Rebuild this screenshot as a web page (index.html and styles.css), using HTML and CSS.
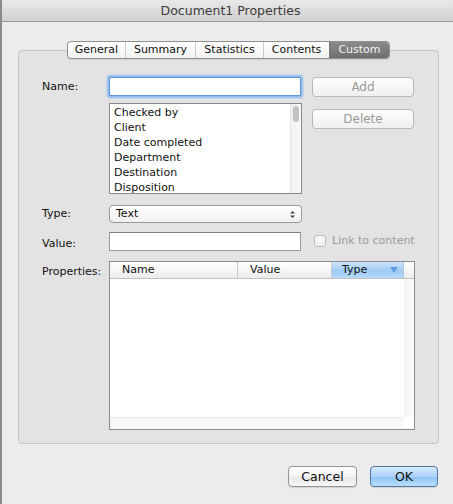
FILE: index.html
```html
<!DOCTYPE html>
<html>
<head>
<meta charset="utf-8">
<link rel="stylesheet" href="styles.css">
</head>
<body>
<div class="window">
  <div class="titlebar">Document1 Properties</div>
  <div class="content">
    <div class="tabs">
      <span class="tab">General</span>
      <span class="tab">Summary</span>
      <span class="tab">Statistics</span>
      <span class="tab">Contents</span>
      <span class="tab selected">Custom</span>
    </div>
    <div class="group">
      <div class="form">
        <label class="lbl lbl-name">Name:</label>
        <div class="input focus"></div>
        <div class="btn disabled">Add</div>

        <div></div>
        <div class="listbox">
          <div class="items">
            <div>Checked by</div>
            <div>Client</div>
            <div>Date completed</div>
            <div>Department</div>
            <div>Destination</div>
            <div>Disposition</div>
          </div>
          <div class="vscroll"><div class="thumb"></div></div>
        </div>
        <div class="btn disabled btn-delete">Delete</div>

        <label class="lbl lbl-type">Type:</label>
        <div class="popup row-type"><span>Text</span>
          <svg width="7" height="9" viewBox="0 0 7 9"><path d="M1 3.5 L3.5 1 L6 3.5 Z M1 5.5 L3.5 8 L6 5.5 Z" fill="#444"/></svg>
        </div>
        <div class="row-type"></div>

        <label class="lbl lbl-value">Value:</label>
        <div class="input plain row-value"></div>
        <div class="check row-value"><span class="box"></span><span>Link to content</span></div>

        <label class="lbl lbl-props">Properties:</label>
        <div class="table row-props">
          <div class="thead">
            <div class="th c-name">Name</div>
            <div class="th c-value">Value</div>
            <div class="th c-type">Type <svg width="8" height="6" viewBox="0 0 8 6"><path d="M0 0 H8 L4 6 Z" fill="#5e9ee6"/></svg></div>
            <div class="th c-rest"></div>
          </div>
          <div class="tbody">
            <div class="tmain">
              <div class="tarea"></div>
              <div class="vtrack"></div>
            </div>
            <div class="tfoot">
              <div class="htrack"></div>
              <div class="corner"></div>
            </div>
          </div>
        </div>
      </div>
    </div>
    <div class="actions">
      <div class="btn2">Cancel</div>
      <div class="btn2 ok">OK</div>
    </div>
  </div>
</div>
</body>
</html>
```
FILE: styles.css
```css
* { box-sizing: border-box; }
html, body { margin: 0; padding: 0; }
body {
  width: 453px;
  height: 504px;
  overflow: hidden;
  font-family: "DejaVu Sans", "Liberation Sans", sans-serif;
  font-size: 11px;
  color: #111;
}
.window {
  width: 453px;
  height: 504px;
  background: #ececec;
  border-left: 2px solid #8a8a8a;
  display: flex;
  flex-direction: column;
}
.titlebar {
  height: 22px;
  flex: none;
  background: linear-gradient(#e9e9e9, #d0d0d0);
  border-bottom: 1px solid #9b9b9b;
  text-align: center;
  font-size: 12.5px;
  line-height: 21px;
  color: #3c3c3c;
  padding-left: 6px;
}
.content {
  padding: 19px 0 0 16px;
}
.tabs {
  display: flex;
  width: 323px;
  height: 18px;
  margin: 0 0 -9px 49px;
  position: relative;
  z-index: 1;
  border: 1px solid #8f8f8f;
  border-radius: 4px;
  background: linear-gradient(#ffffff, #f1f1f1);
  overflow: hidden;
  box-shadow: 0 1px 1px rgba(0,0,0,0.08);
}
.tab {
  flex: none;
  text-align: center;
  line-height: 16px;
  font-size: 11px;
  color: #111;
  border-right: 1px solid #c9c9c9;
}
.tab:nth-child(1) { width: 58px; }
.tab:nth-child(2) { width: 70px; }
.tab:nth-child(3) { width: 68px; }
.tab:nth-child(4) { width: 66px; border-right: 1px solid #777; }
.tab.selected {
  flex: 1;
  border-right: none;
  background: linear-gradient(#8a8a8a, #6f6f6f);
  color: #f4f4f4;
}
.group {
  width: 421px;
  height: 394px;
  background: #e3e3e3;
  border: 1px solid #c6c6c6;
  border-radius: 4px;
  padding: 26px 0 0 23px;
}
.form {
  display: grid;
  grid-template-columns: 57px 193px 102px;
  column-gap: 10px;
  align-items: start;
}
.lbl {
  font-size: 11px;
  color: #111;
}
.lbl-name { padding-top: 3px; }
.input {
  height: 19px;
  width: 192px;
  background: #fff;
  border: 1px solid #9c9c9c;
  border-top-color: #7d7d7d;
}
.input.focus {
  border: 1px solid #5e92d3;
  box-shadow: 0 0 2px 2px #8ebbef;
  border-radius: 1px;
}
.btn {
  height: 20px;
  border: 1px solid #b9b9b9;
  border-radius: 4px;
  background: linear-gradient(#fdfdfd, #f0f0f0);
  text-align: center;
  line-height: 18px;
  font-size: 12px;
}
.btn.disabled { color: #9a9a9a; }
.btn-delete { margin-top: 12px; }
.listbox {
  margin-top: 6px;
  height: 91px;
  width: 193px;
  background: #fff;
  border: 1px solid #888;
  display: flex;
}
.items {
  flex: 1;
  padding: 1px 0 0 4px;
  line-height: 15px;
  font-size: 11px;
}
.vscroll {
  width: 11px;
  flex: none;
  background: linear-gradient(90deg, #f0f0f0, #fafafa);
  border-left: 1px solid #e4e4e4;
  padding: 2px 2px 0 2px;
}
.thumb {
  height: 16px;
  width: 6px;
  border-radius: 3px;
  background: #c2c2c2;
}
.lbl-type { margin-top: 11px; padding-top: 2px; }
.popup.row-type {
  margin-top: 11px;
  height: 18px;
  width: 193px;
  border: 1px solid #9a9a9a;
  border-radius: 4px;
  background: linear-gradient(#ffffff, #f0f0f0);
  display: flex;
  align-items: center;
  justify-content: space-between;
  padding: 0 5px 0 6px;
}
.popup span { line-height: 16px; }
.lbl-value { margin-top: 11px; padding-top: 3px; }
.input.row-value { margin-top: 9px; height: 19px; }
.check.row-value {
  margin-top: 11px;
  display: flex;
  align-items: center;
  gap: 6px;
  color: #9a9a9a;
  font-size: 11px;
  padding-left: 2px;
  white-space: nowrap;
}
.box {
  flex: none;
  width: 12px;
  height: 12px;
  border: 1px solid #bdbdbd;
  border-radius: 3px;
  background: linear-gradient(#fafafa, #eeeeee);
}
.lbl-props { margin-top: 12px; padding-top: 2px; }
.table.row-props {
  grid-column: 2 / 4;
  margin-top: 10px;
  width: 306px;
  height: 169px;
  border: 1px solid #8a8a8a;
  background: #fff;
  display: flex;
  flex-direction: column;
}
.thead {
  display: flex;
  height: 17px;
  flex: none;
  background: linear-gradient(#ffffff, #ececec);
  border-bottom: 1px solid #c3c3c3;
}
.th {
  flex: none;
  line-height: 16px;
  font-size: 11px;
  padding-left: 12px;
  border-right: 1px solid #c9c9c9;
}
.c-name { width: 128px; }
.c-value { width: 94px; }
.c-type {
  width: 72px;
  padding-left: 10px;
  display: flex;
  align-items: center;
  justify-content: space-between;
  padding-right: 5px;
  background: linear-gradient(#d1e5fa, #9ecbf5 55%, #b7dbfc);
  border-right: 1px solid #b5c8dc;
}
.c-rest { flex: 1; border-right: none; }
.tbody {
  flex: 1;
  display: flex;
  flex-direction: column;
}
.tmain { flex: 1; display: flex; }
.tarea { flex: 1; }
.vtrack {
  width: 10px;
  background: linear-gradient(90deg, #f4f4f4, #fbfbfb);
}
.tfoot { height: 12px; display: flex; }
.htrack {
  flex: 1;
  background: linear-gradient(#f6f6f6, #fafafa);
  border-top: 1px solid #ededed;
}
.corner { width: 10px; background: #fff; }
.actions {
  display: flex;
  justify-content: flex-end;
  gap: 13px;
  padding: 22px 15px 0 0;
}
.btn2 {
  height: 21px;
  width: 69px;
  border: 1px solid #939393;
  border-radius: 4px;
  background: linear-gradient(#ffffff, #f3f3f3 50%, #e6e6e6 51%, #f7f7f7);
  text-align: center;
  line-height: 19px;
  font-size: 12.5px;
  color: #111;
  box-shadow: 0 1px 1px rgba(0,0,0,0.12);
}
.btn2.ok {
  width: 68px;
  border-color: #55769e;
  background: linear-gradient(#d8ebfc, #a9d2f8 50%, #8cc1f1 51%, #b8e0fd);
}
```
